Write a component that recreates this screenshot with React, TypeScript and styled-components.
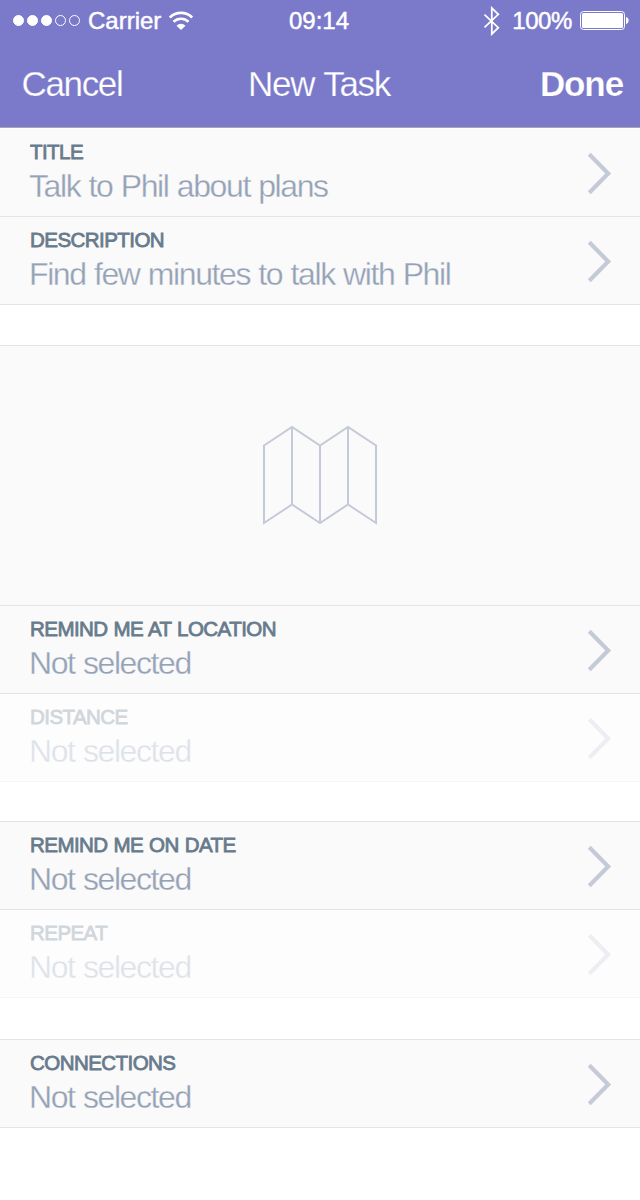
import React from "react";
import styled, { createGlobalStyle } from "styled-components";

const color = {
  purple: "#7b79c9",
  panel: "#fafafa",
  line: "#e2e4e5",
  label: "#677b8c",
  value: "#95a2b6",
  icon: "#c5cad8",
};

const GlobalStyle = createGlobalStyle`
  * { box-sizing: border-box; }
  body {
    margin: 0;
    background: #fff;
    font-family: "Liberation Sans", Arial, sans-serif;
  }
`;

const Screen = styled.main`
  width: 640px;
  height: 1200px;
  overflow: hidden;
  background: #fff;
`;

const Header = styled.header`
  height: 129px;
  background: ${color.purple};
  color: #fff;
  border-bottom: 1px solid #fff;
  box-shadow: inset 0 -1px 0 #a8a6ac;
`;

const StatusBar = styled.div`
  height: 40px;
  display: grid;
  grid-template-columns: 1fr auto 1fr;
  align-items: center;
  padding: 0 11px 0 9px;
`;

const StatusGroup = styled.div<{ $end?: boolean }>`
  display: flex;
  align-items: center;
  justify-content: ${(p) => (p.$end ? "flex-end" : "flex-start")};
  padding-left: ${(p) => (p.$end ? 0 : 4)}px;
`;

const StatusText = styled.span<{ $tight?: boolean }>`
  font-size: 24px;
  line-height: 40px;
  padding-top: 1px;
  letter-spacing: ${(p) => (p.$tight ? "-0.4px" : "0")};
  -webkit-text-stroke: 0.45px #fff;
  white-space: nowrap;
`;

const Dots = styled.div`
  display: flex;
  gap: 3px;
  margin-right: 8px;
`;

const Dot = styled.i<{ $filled: boolean }>`
  width: 11px;
  height: 11px;
  border-radius: 50%;
  border: 1px solid #fff;
  background: ${(p) => (p.$filled ? "#fff" : "transparent")};
`;

const NavBar = styled.nav`
  height: 87px;
  display: grid;
  grid-template-columns: 1fr auto 1fr;
  align-items: center;
  padding: 1px 17px 0 15px;
`;

const NavText = styled.span`
  font-size: 35px;
  line-height: 86px;
  letter-spacing: -1.35px;
  white-space: nowrap;
  -webkit-text-stroke: 0.25px ${color.purple};
`;

const NavCancel = styled(NavText)`
  padding-left: 6.5px;
`;

const NavTitle = styled(NavText)`
  word-spacing: 1.5px;
`;

const NavDone = styled(NavText)`
  justify-self: end;
  font-weight: 700;
  letter-spacing: -1.1px;
`;

const Section = styled.section<{ $gap?: number }>`
  margin-top: ${(p) => p.$gap ?? 0}px;
  border-top: ${(p) => (p.$gap ? `1px solid ${color.line}` : "0")};
`;

const RowBox = styled.div<{ $disabled?: boolean }>`
  height: 88px;
  display: flex;
  justify-content: space-between;
  align-items: flex-start;
  padding: 0 28px 0 29px;
  background: ${color.panel};
  border-bottom: 1px solid ${color.line};
  opacity: ${(p) => (p.$disabled ? 0.3 : 1)};
`;

const RowText = styled.div`
  display: flex;
  flex-direction: column;
  padding-top: 11px;
`;

const Label = styled.span`
  padding-left: 1px;
  font-size: 20.5px;
  line-height: 24px;
  letter-spacing: -0.55px;
  word-spacing: 0.8px;
  color: ${color.label};
  -webkit-text-stroke: 0.8px ${color.label};
`;

const Value = styled.span`
  margin-top: 4px;
  font-size: 32px;
  line-height: 37px;
  letter-spacing: -1.4px;
  word-spacing: 0.8px;
  color: ${color.value};
  -webkit-text-stroke: 0.3px ${color.panel};
  white-space: nowrap;
`;

const ChevronSvg = styled.svg`
  margin-top: 23px;
  flex: none;
`;

const MapPanel = styled.div`
  height: 260px;
  display: flex;
  justify-content: center;
  padding-top: 78px;
  background: ${color.panel};
  border-bottom: 1px solid ${color.line};
`;

const WifiSvg = styled.svg`
  margin-left: 7px;
`;

const BluetoothSvg = styled.svg`
  margin-right: 11px;
`;

const BatterySvg = styled.svg`
  margin-left: 8px;
`;

function Wifi() {
  return (
    <WifiSvg width="26" height="20" viewBox="0 0 26 20" fill="none" stroke="#fff">
      <path d="M1.8 6.4 A16.2 16.2 0 0 1 24.2 6.4" strokeWidth="2.8" />
      <path d="M5.5 10.8 A10.8 10.8 0 0 1 20.5 10.8" strokeWidth="2.7" />
      <path d="M13 19 L8.5 14.8 A6.2 6.2 0 0 1 17.5 14.8 Z" fill="#fff" stroke="none" />
    </WifiSvg>
  );
}

function Bluetooth() {
  return (
    <BluetoothSvg width="18" height="30" viewBox="0 0 18 30" fill="none" stroke="#fff" strokeWidth="1.8">
      <path d="M1.5 8.7 L15.3 21.7 L8.8 28 V2 L15.3 8.3 L1.5 21.3" />
    </BluetoothSvg>
  );
}

function Battery() {
  return (
    <BatterySvg width="49" height="20" viewBox="0 0 49 20">
      <rect x="0.5" y="0.5" width="44" height="18" rx="3" fill="none" stroke="#fff" />
      <rect x="2" y="2" width="41" height="15" rx="1.5" fill="#fff" />
      <path d="M46 6 C49.5 6.8 49.5 12.2 46 13 Z" fill="#fff" />
    </BatterySvg>
  );
}

function Chevron() {
  return (
    <ChevronSvg width="24" height="43" viewBox="0 0 24 43" fill="none">
      <path d="M1.2 2.2 L20.2 21.5 L1.2 40.8" stroke={color.icon} strokeWidth="4.2" />
    </ChevronSvg>
  );
}

function MapIcon() {
  return (
    <svg width="116" height="102" viewBox="0 0 116 102" fill="none" stroke={color.icon} strokeWidth="2">
      <path d="M2 21.5 L30 3 L58 21.5 L86 3 L114 21.5 V99 L86 80.5 L58 99 L30 80.5 L2 99 Z M30 3 V80.5 M58 21.5 V99 M86 3 V80.5" />
    </svg>
  );
}

type RowProps = { label: string; value?: string; disabled?: boolean };

function Row({ label, value = "Not selected", disabled }: RowProps) {
  return (
    <RowBox $disabled={disabled}>
      <RowText>
        <Label>{label}</Label>
        <Value>{value}</Value>
      </RowText>
      <Chevron />
    </RowBox>
  );
}

export default function App() {
  return (
    <>
      <GlobalStyle />
      <Screen>
        <Header>
          <StatusBar>
            <StatusGroup>
              <Dots>
                {[true, true, true, false, false].map((filled, i) => (
                  <Dot key={i} $filled={filled} />
                ))}
              </Dots>
              <StatusText>Carrier</StatusText>
              <Wifi />
            </StatusGroup>
            <StatusText>09:14</StatusText>
            <StatusGroup $end>
              <Bluetooth />
              <StatusText $tight>100%</StatusText>
              <Battery />
            </StatusGroup>
          </StatusBar>
          <NavBar>
            <NavCancel>Cancel</NavCancel>
            <NavTitle>New Task</NavTitle>
            <NavDone>Done</NavDone>
          </NavBar>
        </Header>
        <Section>
          <Row label="TITLE" value="Talk to Phil about plans" />
          <Row label="DESCRIPTION" value="Find few minutes to talk with Phil" />
        </Section>
        <Section $gap={40}>
          <MapPanel>
            <MapIcon />
          </MapPanel>
          <Row label="REMIND ME AT LOCATION" />
          <Row label="DISTANCE" disabled />
        </Section>
        <Section $gap={39}>
          <Row label="REMIND ME ON DATE" />
          <Row label="REPEAT" disabled />
        </Section>
        <Section $gap={41}>
          <Row label="CONNECTIONS" />
        </Section>
      </Screen>
    </>
  );
}
